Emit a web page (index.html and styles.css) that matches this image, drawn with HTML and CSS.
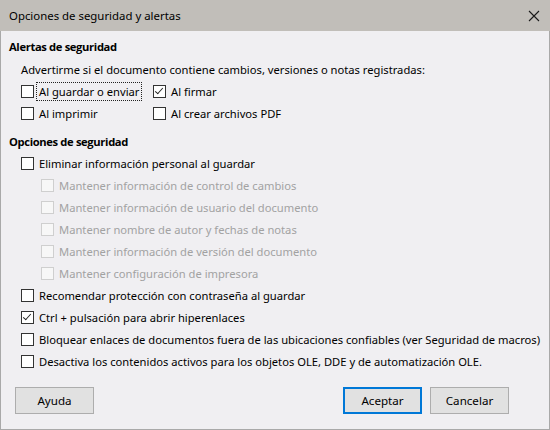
FILE: index.html
```html
<!doctype html>
<html>
  <head>
    <meta charset="utf-8" />
    <link rel="stylesheet" href="styles.css">
  </head>
  <body>
    <div class="window">
      <div class="titlebar">
        <span class="title">Opciones de seguridad y alertas</span>
        <svg class="close" width="12" height="12" viewBox="0 0 12 12">
          <path d="M1 1 L11 11 M11 1 L1 11" stroke="#1a1a1a" stroke-width="1.1" fill="none" />
        </svg>
      </div>

      <div class="content">
        <div class="heading">Alertas de seguridad</div>
        <div class="row indent">Advertirme si el documento contiene cambios, versiones o notas registradas:</div>
        <div class="alert-grid indent">
          <label class="row"><span class="box"></span><span class="focus">Al guardar o enviar</span></label>
          <label class="row"><span class="box checked"></span><span>Al firmar</span></label>
          <label class="row"><span class="box"></span><span>Al imprimir</span></label>
          <label class="row"><span class="box"></span><span>Al crear archivos PDF</span></label>
        </div>

        <div class="heading second">Opciones de seguridad</div>
        <label class="row indent"><span class="box"></span><span>Eliminar información personal al guardar</span></label>
        <div class="sub">
          <label class="row disabled"><span class="box"></span><span>Mantener información de control de cambios</span></label>
          <label class="row disabled"><span class="box"></span><span>Mantener información de usuario del documento</span></label>
          <label class="row disabled"><span class="box"></span><span>Mantener nombre de autor y fechas de notas</span></label>
          <label class="row disabled"><span class="box"></span><span>Mantener información de versión del documento</span></label>
          <label class="row disabled"><span class="box"></span><span>Mantener configuración de impresora</span></label>
        </div>
        <label class="row indent"><span class="box"></span><span>Recomendar protección con contraseña al guardar</span></label>
        <label class="row indent"><span class="box checked"></span><span>Ctrl + pulsación para abrir hiperenlaces</span></label>
        <label class="row indent"><span class="box"></span><span>Bloquear enlaces de documentos fuera de las ubicaciones confiables (ver Seguridad de macros)</span></label>
        <label class="row indent"><span class="box"></span><span>Desactiva los contenidos activos para los objetos OLE, DDE y de automatización OLE.</span></label>
      </div>

      <div class="buttons">
        <button class="btn">Ayuda</button>
        <span class="spacer"></span>
        <button class="btn default">Aceptar</button>
        <button class="btn">Cancelar</button>
      </div>
    </div>
  </body>
</html>
```

FILE: styles.css
```css
body {
  margin: 0;
  font-family: "Noto Sans", "Open Sans", sans-serif;
  font-size: 11.2px;
  color: #000;
}
.window {
  width: 550px;
  height: 430px;
  box-sizing: border-box;
  background: #f0eff2;
  border: 1px solid #a9a9a9;
  border-top: none;
  display: flex;
  flex-direction: column;
}
.titlebar {
  height: 31px;
  flex: none;
  background: #c1beb9;
  display: flex;
  align-items: center;
  padding-left: 9px;
  padding-right: 9px;
  margin: 0 -1px;
  font-size: 11.4px;
}
.title {
  flex: 1;
}
.close {
  margin-right: 1px;
}
.content {
  padding: 5px 0 0 8px;
  flex: 1;
}
.heading {
  height: 22px;
  line-height: 22px;
  font-family: "Open Sans", "Noto Sans", sans-serif;
  font-weight: 700;
  font-size: 11.2px;
  letter-spacing: -0.35px;
}
.heading.second {
  margin-top: 7px;
  height: 21px;
  line-height: 21px;
}
.row {
  height: 22px;
  display: flex;
  align-items: center;
  white-space: nowrap;
}
.indent {
  margin-left: 12px;
}
.sub {
  margin-left: 32px;
}
.alert-grid {
  display: grid;
  grid-template-columns: 132px auto;
}
.box {
  width: 11px;
  height: 11px;
  border: 1px solid #333;
  background: #fff;
  margin-right: 5px;
  flex: none;
  position: relative;
}
.box.checked::after {
  content: "";
  position: absolute;
  left: 3px;
  top: 0px;
  width: 3px;
  height: 7px;
  border-right: 1px solid #222;
  border-bottom: 1px solid #222;
  transform: rotate(42deg);
}
.focus {
  outline: 1px dotted #222;
  outline-offset: 1px;
  padding: 0 1px;
  margin-left: -1px;
}
.disabled {
  color: #a2a2a2;
}
.disabled .box {
  border-color: #cfcfcf;
  background: #f7f7f7;
}
.buttons {
  display: flex;
  padding: 0 40px 15px 14px;
  gap: 8px;
}
.spacer {
  flex: 1;
}
.btn {
  width: 79px;
  height: 27px;
  box-sizing: border-box;
  background: #e1e1e1;
  border: 1px solid #adadad;
  font-family: inherit;
  font-size: 11.6px;
  color: #000;
  padding: 0;
}
.btn.default {
  border: 2px solid #0078d7;
}
```
